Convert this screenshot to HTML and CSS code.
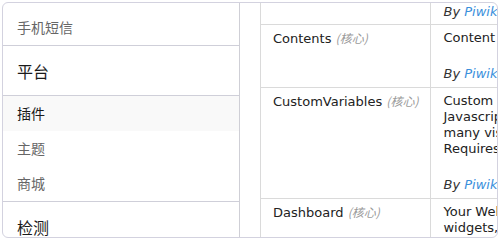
FILE: index.html
```html
<!DOCTYPE html>
<html lang="zh-CN">
<head>
<meta charset="utf-8">
<title>插件</title>
<link rel="stylesheet" href="styles.css">
</head>
<body>
<div class="page">
  <div class="frame">
    <nav class="sidebar">
      <ul class="group lead">
        <li class="item muted">手机短信</li>
      </ul>
      <div class="group">
        <div class="group-title">平台</div>
        <ul>
          <li class="item active">插件</li>
          <li class="item muted">主题</li>
          <li class="item muted">商城</li>
        </ul>
      </div>
      <div class="group last">
        <div class="group-title">检测</div>
      </div>
    </nav>
    <main class="content">
      <table class="plugins">
        <tr class="partial">
          <td class="name"></td>
          <td class="desc"><div class="author">By <a class="link">Piwik</a></div></td>
        </tr>
        <tr>
          <td class="name">Contents <span class="core">(核心)</span></td>
          <td class="desc">
            <div>Content Tracking lets you track how users interact with specific content.</div>
            <div class="author spaced">By <a class="link">Piwik</a></div>
          </td>
        </tr>
        <tr>
          <td class="name">CustomVariables <span class="core">(核心)</span></td>
          <td class="desc">
            <div>Custom Variables are name-value pairs that you can assign using the<br>Javascript API to visits or any of their actions. Piwik will then report how<br>many visits, pages, conversions for each of these custom names and values.<br>Requires the Custom Variables plugin to be activated.</div>
            <div class="author spaced">By <a class="link">Piwik</a></div>
          </td>
        </tr>
        <tr>
          <td class="name">Dashboard <span class="core">(核心)</span></td>
          <td class="desc">
            <div>Your Web Analytics Dashboard. Customise your dashboard by adding new<br>widgets, drag and drop them around, and change the dashboard column layout.</div>
          </td>
        </tr>
      </table>
    </main>
  </div>
</div>
</body>
</html>
```
FILE: styles.css
```css
* { box-sizing: border-box; }
html, body { margin: 0; padding: 0; background: #fff; }
body { font-family: "DejaVu Sans", "Noto Sans CJK SC", sans-serif; }

.page { padding: 2px; }

.frame {
  display: flex;
  width: 496px;
  height: 236px;
  border: 1px solid #d3d2df;
  border-radius: 6px;
  overflow: hidden;
  background: #fff;
}

.sidebar {
  flex: 0 0 237px;
  border-right: 1px solid #cfcfd6;
  font-family: "Noto Sans CJK SC", "DejaVu Sans", sans-serif;
}
.sidebar ul { list-style: none; margin: 0; padding: 0; }

.group { border-bottom: 1px solid #cfcfd9; }
.group.last { border-bottom: 0; }
.group.lead { padding-top: 7px; }

.group-title {
  height: 50px;
  display: flex;
  align-items: center;
  padding-left: 14px;
  font-size: 16px;
  color: #1a1a1a;
  border-bottom: 1px solid #cfcfd9;
}

.item {
  height: 35px;
  display: flex;
  align-items: center;
  padding-left: 14px;
  padding-bottom: 2px;
  font-size: 14px;
}
.item.muted { color: #666; }
.item.active { color: #1a1a1a; background: #f9f9f9; }

.content {
  flex: 1 1 auto;
  min-width: 0;
  overflow: hidden;
  padding-left: 20px;
}

.plugins {
  border-collapse: separate;
  border-spacing: 0;
  border-left: 1px solid #dadada;
  font-size: 13px;
  line-height: 16px;
  color: #222;
  table-layout: fixed;
  white-space: nowrap;
}
.plugins td {
  vertical-align: top;
  padding: 5px 12px;
  border-bottom: 1px solid #dadada;
}
.plugins td.name {
  width: 172px;
  border-right: 1px solid #dadada;
}
.plugins td.desc { width: 520px; }
.plugins tr.partial td { padding-top: 1px; padding-bottom: 4px; }

.core {
  font-style: italic;
  color: #9a9a9a;
  font-family: "Noto Sans CJK SC", "DejaVu Sans", sans-serif;
  font-size: 12px;
}

.author { font-style: italic; color: #333; }
.author.spaced { margin-top: 20px; }
.link { color: #3a8fdb; text-decoration: none; }
```
